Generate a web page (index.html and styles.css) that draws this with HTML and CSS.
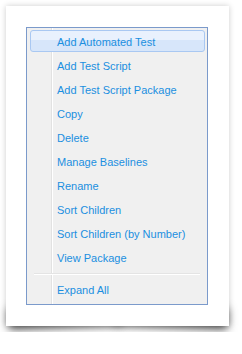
FILE: index.html
```html
<!DOCTYPE html>
<html lang="en">
<head>
  <meta charset="UTF-8" />
  <meta name="viewport" content="width=device-width, initial-scale=1.0"/>
  <title>Context Menu</title>

  <link rel="stylesheet" href="styles.css">
</head>

<body>
  <div class="card">
    <ul class="menu">
      <li class="menu-item active">Add Automated Test</li>
      <li class="menu-item">Add Test Script</li>
      <li class="menu-item">Add Test Script Package</li>
      <li class="menu-item">Copy</li>
      <li class="menu-item">Delete</li>
      <li class="menu-item">Manage Baselines</li>
      <li class="menu-item">Rename</li>
      <li class="menu-item">Sort Children</li>
      <li class="menu-item">Sort Children (by Number)</li>
      <li class="menu-item">View Package</li>
      <li class="menu-sep"></li>
      <li class="menu-item">Expand All</li>
    </ul>
  </div>
</body>
</html>
```

FILE: styles.css
```css
body {
  margin: 0;
  padding: 6px;
  background: #fff;
  font-family: "Liberation Sans", Arial, sans-serif;
}

.card {
  position: relative;
  width: 182px;
  padding: 21px 21px 21px 20px;
  background: #fff;
  box-shadow: 0 0 6px rgba(0, 0, 0, 0.2);
}

/* lifted corner shadows */
.card::before,
.card::after {
  content: "";
  position: absolute;
  z-index: -1;
  bottom: 16px;
  width: 50%;
  height: 20px;
  box-shadow: 0 17px 10px rgba(0, 0, 0, 0.75);
}

.card::before {
  left: 2px;
  transform: rotate(-2deg);
}

.card::after {
  right: 2px;
  transform: rotate(2deg);
}

.menu {
  list-style: none;
  margin: 0;
  padding: 2px 1px 2px 1px;
  border: 1px solid #7b9acb;
  background-color: #f0f0f0;
  background-image: linear-gradient(to right, transparent 24px, #e2e2e2 24px, #e2e2e2 25px, #fff 25px, #fff 26px, transparent 26px);
}

.menu-item {
  box-sizing: border-box;
  height: 24px;
  line-height: 24px;
  padding-left: 29px;
  font-size: 11px;
  color: #1b8fe0;
  white-space: nowrap;
}

.menu-item.active {
  height: 22px;
  line-height: 22px;
  margin: 0 1px 2px 2px;
  padding-left: 26px;
  border: 1px solid #a9c8f2;
  border-radius: 3px;
  background: linear-gradient(to bottom, #e9f1fd 0, #e9f1fd 45%, #d7e6fa 45%, #d7e6fa 100%);
}

.menu-sep {
  height: 1px;
  margin: 3px 6px 3px 6px;
  border-top: 1px solid #e4e4e4;
  background: #fff;
}
```
